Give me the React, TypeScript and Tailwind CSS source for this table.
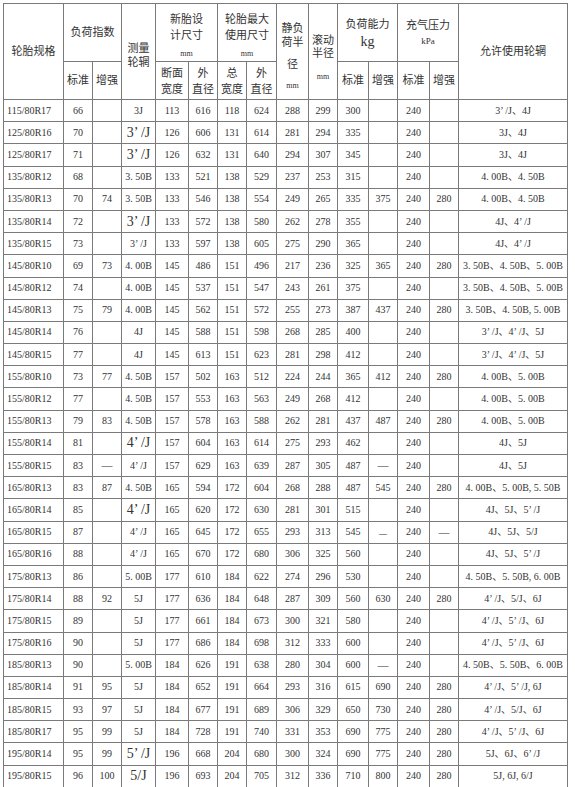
const colWidths = [
  "w-[60px]", "w-[29px]", "w-[29px]", "w-[34px]", "w-[33px]", "w-[29px]", "w-[29px]", "w-[30px]",
  "w-[32px]", "w-[29px]", "w-[31px]", "w-[29px]", "w-[32px]", "w-[29px]", "w-[109px]",
];

// spec, li std, li enh, rim (* = big), w, d, maxW, maxD, static r, rolling r, load std, load enh, p std, p enh, allowed rims
const rows: string[][] = [
  ["115/80R17", "66", "", "3J", "113", "616", "118", "624", "288", "299", "300", "", "240", "", "3’ /J、4J"],
  ["125/80R16", "70", "", "*3’ /J", "126", "606", "131", "614", "281", "294", "335", "", "240", "", "3J、4J"],
  ["125/80R17", "71", "", "*3’ /J", "126", "632", "131", "640", "294", "307", "345", "", "240", "", "3J、4J"],
  ["135/80R12", "68", "", "3. 50B", "133", "521", "138", "529", "237", "253", "315", "", "240", "", "4. 00B、4. 50B"],
  ["135/80R13", "70", "74", "3. 50B", "133", "546", "138", "554", "249", "265", "335", "375", "240", "280", "4. 00B、4. 50B"],
  ["135/80R14", "72", "", "*3’ /J", "133", "572", "138", "580", "262", "278", "355", "", "240", "", "4J、4’ /J"],
  ["135/80R15", "73", "", "3’ /J", "133", "597", "138", "605", "275", "290", "365", "", "240", "", "4J、4’ /J"],
  ["145/80R10", "69", "73", "4. 00B", "145", "486", "151", "496", "217", "236", "325", "365", "240", "280", "3. 50B、4. 50B、5. 00B"],
  ["145/80R12", "74", "", "4. 00B", "145", "537", "151", "547", "243", "261", "375", "", "240", "", "3. 50B、4. 50B、5. 00B"],
  ["145/80R13", "75", "79", "4. 00B", "145", "562", "151", "572", "255", "273", "387", "437", "240", "280", "3. 50B、4. 50B, 5. 00B"],
  ["145/80R14", "76", "", "4J", "145", "588", "151", "598", "268", "285", "400", "", "240", "", "3’ /J、4’ /J、5J"],
  ["145/80R15", "77", "", "4J", "145", "613", "151", "623", "281", "298", "412", "", "240", "", "3’ /J、4’ /J、5J"],
  ["155/80R10", "73", "77", "4. 50B", "157", "502", "163", "512", "224", "244", "365", "412", "240", "280", "4. 00B、5. 00B"],
  ["155/80R12", "77", "", "4. 50B", "157", "553", "163", "563", "249", "268", "412", "", "240", "", "4. 00B、5. 00B"],
  ["155/80R13", "79", "83", "4. 50B", "157", "578", "163", "588", "262", "281", "437", "487", "240", "280", "4. 00B、5. 00B"],
  ["155/80R14", "81", "", "*4’ /J", "157", "604", "163", "614", "275", "293", "462", "", "240", "", "4J、5J"],
  ["155/80R15", "83", "—", "4’ /J", "157", "629", "163", "639", "287", "305", "487", "—", "240", "", "4J、5J"],
  ["165/80R13", "83", "87", "4. 50B", "165", "594", "172", "604", "268", "288", "487", "545", "240", "280", "4. 00B、5. 00B, 5. 50B"],
  ["165/80R14", "85", "", "*4’ /J", "165", "620", "172", "630", "281", "301", "515", "", "240", "", "4J、5J、5’ /J"],
  ["165/80R15", "87", "", "4’ /J", "165", "645", "172", "655", "293", "313", "545", "_", "240", "—", "4J、5J、5/J"],
  ["165/80R16", "88", "", "4’ /J", "165", "670", "172", "680", "306", "325", "560", "", "240", "", "4J、5J、5’ /J"],
  ["175/80R13", "86", "", "5. 00B", "177", "610", "184", "622", "274", "296", "530", "", "240", "", "4. 50B、5. 50B, 6. 00B"],
  ["175/80R14", "88", "92", "5J", "177", "636", "184", "648", "287", "309", "560", "630", "240", "280", "4’ /J、5/J、6J"],
  ["175/80R15", "89", "", "5J", "177", "661", "184", "673", "300", "321", "580", "", "240", "", "4’ /J、5’ /J、6J"],
  ["175/80R16", "90", "", "5J", "177", "686", "184", "698", "312", "333", "600", "", "240", "", "4’ /J、5’ /J、6J"],
  ["185/80R13", "90", "", "5. 00B", "184", "626", "191", "638", "280", "304", "600", "—", "240", "", "4. 50B、5. 50B、6. 00B"],
  ["185/80R14", "91", "95", "5J", "184", "652", "191", "664", "293", "316", "615", "690", "240", "280", "4’ /J、5’ /J, 6J"],
  ["185/80R15", "93", "97", "5J", "184", "677", "191", "689", "306", "329", "650", "730", "240", "280", "4’ /J、5/J、6J"],
  ["185/80R17", "95", "99", "5J", "184", "728", "191", "740", "331", "353", "690", "775", "240", "280", "4’ /J、5’ /J、6J"],
  ["195/80R14", "95", "99", "*5’ /J", "196", "668", "204", "680", "300", "324", "690", "775", "240", "280", "5J、6J、6’ /J"],
  ["195/80R15", "96", "100", "*5/J", "196", "693", "204", "705", "312", "336", "710", "800", "240", "280", "5J, 6J, 6/J"],
];

const th = "border border-[#7a7a7a] p-0 font-normal align-middle text-center";
const td = "border border-[#7a7a7a] p-0 h-[22.2px] align-middle text-center whitespace-nowrap";

function Cell({ value, index }: { value: string; index: number }) {
  if (index === 0) {
    return <td className={`${td} !text-left pl-[3px]`}>{value}</td>;
  }
  if (value.startsWith("*")) {
    return <td className={`${td} text-[14px]`}>{value.slice(1)}</td>;
  }
  if (value === "—") {
    return <td className={`${td} text-[11px]`}>—</td>;
  }
  if (value === "_") {
    return <td className={`${td} text-[8px] pt-[4px]`}>—</td>;
  }
  return <td className={td}>{value}</td>;
}

export default function App() {
  return (
    <div className="min-h-screen bg-white pl-[3px] pt-[3px] text-[#333]">
      <table
        className="w-[564px] table-fixed border-collapse text-[10px] leading-none"
        style={{ fontFamily: '"Liberation Serif", "Noto Sans CJK SC", serif' }}
      >
        <colgroup>
          {colWidths.map((w, i) => (
            <col key={i} className={w} />
          ))}
        </colgroup>
        <thead className="text-[11px]">
          <tr className="h-[58px]">
            <th rowSpan={2} className={th}>轮胎规格</th>
            <th colSpan={2} className={th}>负荷指数</th>
            <th rowSpan={2} className={`${th} leading-[14px] pt-[6px]`}>
              测量
              <br />
              轮辋
            </th>
            <th colSpan={2} className={`${th} align-top pt-[7px] leading-[16px]`}>
              新胎设
              <br />
              计尺寸
              <div className="mt-[6px] text-[8px] leading-[10px]">mm</div>
            </th>
            <th colSpan={2} className={`${th} align-top pt-[7px] leading-[16px]`}>
              轮胎最大
              <br />
              使用尺寸
              <div className="mt-[6px] text-[8px] leading-[10px]">mm</div>
            </th>
            <th rowSpan={2} className={`${th} align-top pt-[17px] leading-[14px]`}>
              静负
              <br />
              荷半
              <div className="mt-[8px]">径</div>
              <div className="mt-[10px] text-[8px] leading-[10px]">mm</div>
            </th>
            <th rowSpan={2} className={`${th} align-top pt-[30px] leading-[13px]`}>
              滚动
              <br />
              半径
              <div className="mt-[12px] text-[8px] leading-[10px]">mm</div>
            </th>
            <th colSpan={2} className={`${th} leading-[18px]`}>
              负荷能力
              <div className="text-[14px] leading-[18px]">kg</div>
            </th>
            <th colSpan={2} className={`${th} leading-[16px]`}>
              充气压力
              <div className="text-[9px] leading-[16px]">kPa</div>
            </th>
            <th rowSpan={2} className={th}>允许使用轮辋</th>
          </tr>
          <tr className="h-[38px]">
            <th className={th}>标准</th>
            <th className={th}>增强</th>
            <th className={`${th} leading-[16px]`}>
              断面
              <br />
              宽度
            </th>
            <th className={`${th} leading-[16px]`}>
              外
              <br />
              直径
            </th>
            <th className={`${th} leading-[16px]`}>
              总
              <br />
              宽度
            </th>
            <th className={`${th} leading-[16px]`}>
              外
              <br />
              直径
            </th>
            <th className={th}>标准</th>
            <th className={th}>增强</th>
            <th className={th}>标准</th>
            <th className={th}>增强</th>
          </tr>
        </thead>
        <tbody>
          {rows.map((r) => (
            <tr key={r[0]}>
              {r.map((v, i) => (
                <Cell key={i} value={v} index={i} />
              ))}
            </tr>
          ))}
        </tbody>
      </table>
    </div>
  );
}
